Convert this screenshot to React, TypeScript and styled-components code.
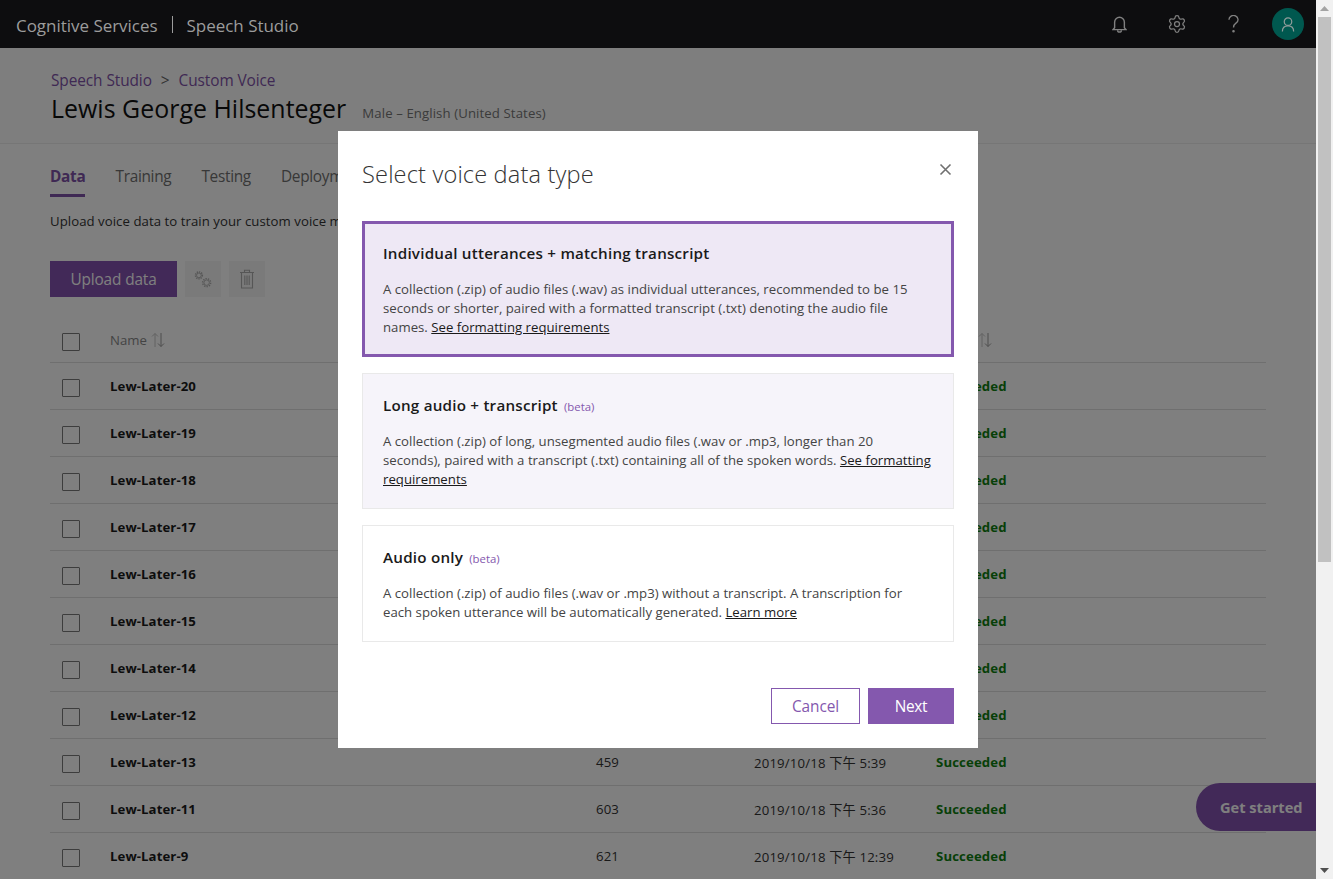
import React from "react";
import styled, { createGlobalStyle } from "styled-components";
import { Settings } from "lucide-react";

const FONT = `"Open Sans", "Noto Sans CJK SC", sans-serif`;

const Global = createGlobalStyle`
  html, body { margin: 0; padding: 0; height: 100%; overflow: hidden; background: #fff; }
  * { box-sizing: border-box; }
  body { font-family: ${FONT}; color: #1a1a1a; }
`;

const Shell = styled.div`
  display: flex;
  width: 1333px;
  height: 879px;
  overflow: hidden;
`;
const Viewport = styled.div`
  position: relative;
  flex: 1;
  min-width: 0;
  overflow: hidden;
  background: #fff;
`;
const Scrollbar = styled.div`
  width: 17px;
  background: #f1f1f1;
  display: flex;
  flex-direction: column;
  align-items: center;
`;
const ScrollButton = styled.div`
  height: 17px;
  width: 17px;
  display: flex;
  align-items: center;
  justify-content: center;
  flex: none;
`;
const ScrollThumb = styled.div`
  width: 13px;
  height: 545px;
  background: #c1c1c1;
`;
const ScrollSpace = styled.div`
  flex: 1;
`;

const TopBar = styled.header`
  position: relative;
  z-index: 3;
  height: 48px;
  background: #0d0d0f;
  display: flex;
  align-items: center;
  padding: 0 24px 0 16px;
  color: #9c9c9c;
`;
const Brand = styled.span`
  font-size: 17px;
  letter-spacing: -0.03px;
  line-height: 48px;
  padding-top: 3px;
  white-space: nowrap;
`;
const BrandRule = styled.span`
  width: 1px;
  height: 17px;
  background: #9c9c9c;
  margin: 0 14px;
`;
const TopActions = styled.div`
  margin-left: auto;
  display: flex;
  align-items: center;
`;
const TopIcon = styled.div`
  width: 57px;
  height: 48px;
  display: flex;
  align-items: center;
  justify-content: center;
`;
const Avatar = styled.div`
  width: 32px;
  height: 32px;
  margin-left: 10px;
  margin-right: -12px;
  border-radius: 50%;
  background: #00584f;
  display: flex;
  align-items: center;
  justify-content: center;
`;

const Hero = styled.section`
  height: 96px;
  background: #fdfdfd;
  border-bottom: 1px solid #ededed;
  padding: 22px 51px 0;
`;
const Crumbs = styled.div`
  font-size: 15.4px;
  letter-spacing: -0.08px;
  line-height: 21px;
  color: #7f52a8;
  display: flex;
  gap: 9px;
`;
const CrumbSep = styled.span`
  color: #666;
`;
const TitleRow = styled.div`
  display: flex;
  align-items: baseline;
`;
const Title = styled.h1`
  margin: 0;
  font-size: 24.9px;
  font-weight: 500;
  letter-spacing: 0.03px;
  line-height: 34px;
  color: #111;
`;
const Subtitle = styled.span`
  margin-left: 16px;
  font-size: 13.2px;
  letter-spacing: 0.1px;
  color: #777;
`;

const Body = styled.div`
  padding: 0 50px;
`;
const Tabs = styled.nav`
  display: flex;
  gap: 30px;
  margin-top: 21px;
`;
const Tab = styled.span<{ $active?: boolean }>`
  height: 32px;
  font-size: 15.4px;
  letter-spacing: -0.3px;
  line-height: 24px;
  font-weight: ${(p) => (p.$active ? 700 : 400)};
  color: ${(p) => (p.$active ? "#7f52a8" : "#707070")};
  border-bottom: 3px solid ${(p) => (p.$active ? "#7f52a8" : "transparent")};
`;
const Lead = styled.p`
  margin: 14px 0 0;
  font-size: 13.2px;
  letter-spacing: 0.05px;
  line-height: 20px;
  color: #333;
  white-space: nowrap;
`;
const Toolbar = styled.div`
  display: flex;
  gap: 8px;
  margin-top: 30px;
`;
const PrimaryAction = styled.div`
  width: 127px;
  height: 36px;
  background: #8452b0;
  color: #fff;
  font-size: 15.4px;
  letter-spacing: -0.14px;
  display: flex;
  align-items: center;
  justify-content: center;
`;
const IconAction = styled.div`
  width: 36px;
  height: 36px;
  background: #f4f4f4;
  display: flex;
  align-items: center;
  justify-content: center;
`;

const Table = styled.div`
  margin-top: 20px;
  width: 1216px;
`;
const Row = styled.div<{ $head?: boolean }>`
  display: grid;
  grid-template-columns: 60px 486px 158px 182px 1fr;
  align-items: center;
  height: ${(p) => (p.$head ? "46px" : "47px")};
  border-bottom: 1px solid #dedede;
  font-size: 13.2px;
  color: #333;
`;
const Checkbox = styled.span`
  width: 18px;
  height: 18px;
  margin: 4px 0 0 12px;
  border: 1px solid #7a7a7a;
  border-radius: 1px;
`;
const HeadName = styled.span`
  display: flex;
  align-items: center;
  gap: 4px;
  color: #888;
  font-size: 13.2px;
`;
const HeadSortOnly = styled.span`
  display: flex;
  align-items: center;
  padding-left: 42px;
`;
const NameCell = styled.span`
  font-weight: 700;
  color: #1a1a1a;
  letter-spacing: 0.08px;
`;
const CountCell = styled.span`
  color: #333;
  letter-spacing: 0.1px;
`;
const DateCell = styled.span`
  color: #333;
  letter-spacing: 0.16px;
  white-space: nowrap;
`;
const StatusCell = styled.span`
  font-weight: 700;
  color: #0e8010;
  letter-spacing: 0.13px;
`;

const GetStarted = styled.div`
  position: absolute;
  z-index: 1;
  right: 0;
  top: 783px;
  width: 120px;
  height: 48px;
  background: #8452b0;
  border-radius: 24px 0 0 24px;
  display: flex;
  align-items: center;
  padding-left: 24px;
  color: #fff;
  font-size: 14.6px;
  font-weight: 700;
  letter-spacing: 0;
  white-space: nowrap;
`;

const Scrim = styled.div`
  position: absolute;
  z-index: 2;
  inset: 0;
  background: rgba(0, 0, 0, 0.5);
`;

const Dialog = styled.div`
  position: absolute;
  z-index: 4;
  left: 338px;
  top: 131px;
  width: 640px;
  height: 617px;
  background: #fff;
  padding: 0 24px;
  display: flex;
  flex-direction: column;
`;
const DialogHead = styled.div`
  height: 90px;
  display: flex;
  justify-content: space-between;
  padding-top: 26px;
`;
const DialogTitle = styled.h2`
  margin: 0;
  font-size: 23.6px;
  font-weight: 300;
  letter-spacing: 0.15px;
  line-height: 34px;
  color: #333;
`;
const CloseButton = styled.div`
  margin: 6px 2px 0 0;
  width: 13px;
  height: 13px;
  line-height: 0;
`;
const Options = styled.div`
  display: flex;
  flex-direction: column;
  gap: 16px;
`;
const Option = styled.div<{ $kind: "selected" | "hover" | "plain" }>`
  border: ${(p) => (p.$kind === "selected" ? "3px solid #8458ae" : "1px solid #e9e9e9")};
  background: ${(p) =>
    p.$kind === "selected" ? "#eee8f5" : p.$kind === "hover" ? "#f6f4fa" : "#fff"};
  padding: ${(p) => (p.$kind === "selected" ? "18px 18px 17px" : "20px 20px 19px")};
`;
const OptionTitle = styled.div`
  height: 22px;
  font-size: 15.2px;
  font-weight: 600;
  letter-spacing: 0.22px;
  line-height: 22px;
  color: #1a1a1a;
`;
const Beta = styled.span`
  margin-left: 2px;
  font-size: 11.4px;
  font-weight: 400;
  letter-spacing: 0;
  color: #8458ae;
`;
const OptionText = styled.p`
  margin: 16px 0 0;
  font-size: 13.2px;
  letter-spacing: 0.01px;
  line-height: 19px;
  color: #444;
  white-space: nowrap;
`;
const OptionLink = styled.a`
  color: #1a1a1a;
  text-decoration: underline;
`;
const DialogFoot = styled.div`
  margin-top: 46px;
  display: flex;
  justify-content: flex-end;
  gap: 8px;
`;
const CancelButton = styled.div`
  width: 89px;
  height: 36px;
  border: 1px solid #8458ae;
  color: #8458ae;
  font-size: 15.4px;
  letter-spacing: -0.1px;
  display: flex;
  align-items: center;
  justify-content: center;
`;
const NextButton = styled.div`
  width: 86px;
  height: 36px;
  background: #8458ae;
  color: #fff;
  font-size: 15.4px;
  font-weight: 500;
  letter-spacing: -0.3px;
  display: flex;
  align-items: center;
  justify-content: center;
`;

const rows: [string, string, string][] = [
  ["Lew-Later-20", "", ""],
  ["Lew-Later-19", "", ""],
  ["Lew-Later-18", "", ""],
  ["Lew-Later-17", "", ""],
  ["Lew-Later-16", "", ""],
  ["Lew-Later-15", "", ""],
  ["Lew-Later-14", "", ""],
  ["Lew-Later-12", "", ""],
  ["Lew-Later-13", "459", "2019/10/18 下午 5:39"],
  ["Lew-Later-11", "603", "2019/10/18 下午 5:36"],
  ["Lew-Later-9", "621", "2019/10/18 下午 12:39"],
];

const SortIcon = () => (
  <svg width="14" height="16" viewBox="0 0 14 16" fill="none" stroke="#c4c4c4" strokeWidth="1">
    <path d="M4 15V1.5M1 4.5l3-3 3 3" />
    <path d="M10 1v13.5M7 11.5l3 3 3-3" stroke="#9a9a9a" />
  </svg>
);

export default function App() {
  return (
    <Shell>
      <Global />
      <Viewport>
        <TopBar>
          <Brand>Cognitive Services</Brand>
          <BrandRule />
          <Brand>Speech Studio</Brand>
          <TopActions>
            <TopIcon>
              <svg width="15" height="17" viewBox="0 0 16 18" fill="none" stroke="#808080" strokeWidth="1.5">
                <path d="M1 14.5h14l-1.8-2V6.5a5.2 5.2 0 0 0-10.4 0v6z" />
                <path d="M6 15a2 2 0 0 0 4 0" />
              </svg>
            </TopIcon>
            <TopIcon>
              <Settings size={20} color="#808080" strokeWidth={1.5} />
            </TopIcon>
            <TopIcon>
              <svg width="11" height="18" viewBox="0 0 12 20" fill="none" stroke="#808080" strokeWidth="1.5">
                <path d="M1 5.2a5 4.6 0 1 1 8 3.6c-1.8 1.3-3 2.4-3 5" />
                <circle cx="6" cy="18" r=".7" fill="#808080" />
              </svg>
            </TopIcon>
            <Avatar>
              <svg width="14" height="15" viewBox="0 0 14 16" fill="none" stroke="#8f9c9a" strokeWidth="1.3">
                <circle cx="7" cy="5" r="4" />
                <path d="M1 15.5c0-3.6 2.4-6 6-6s6 2.4 6 6" />
              </svg>
            </Avatar>
          </TopActions>
        </TopBar>
        <Hero>
          <Crumbs>
            <span>Speech Studio</span>
            <CrumbSep>&gt;</CrumbSep>
            <span>Custom Voice</span>
          </Crumbs>
          <TitleRow>
            <Title>Lewis George Hilsenteger</Title>
            <Subtitle>Male – English (United States)</Subtitle>
          </TitleRow>
        </Hero>
        <Body>
          <Tabs>
            <Tab $active>Data</Tab>
            <Tab>Training</Tab>
            <Tab>Testing</Tab>
            <Tab>Deployment</Tab>
          </Tabs>
          <Lead>Upload voice data to train your custom voice model.</Lead>
          <Toolbar>
            <PrimaryAction>Upload data</PrimaryAction>
            <IconAction>
              <svg width="22" height="20" viewBox="0 0 24 22" fill="none" stroke="#adadad" strokeWidth="1">
                <circle cx="7.5" cy="7" r="2.6" />
                <circle cx="7.5" cy="7" r="3.8" strokeDasharray="1.4 1.1" strokeWidth="1.6" />
                <circle cx="16" cy="15" r="3" />
                <circle cx="16" cy="15" r="4.4" strokeDasharray="1.5 1.2" strokeWidth="1.6" />
              </svg>
            </IconAction>
            <IconAction>
              <svg width="16" height="20" viewBox="0 0 16 20" fill="none" stroke="#adadad" strokeWidth="1.1">
                <path d="M1 3.5h14M5.5 3.5V1.2h5v2.3M2.5 3.5v15.5h11V3.5M5.8 6.5v9.5M8 6.5v9.5M10.2 6.5v9.5" />
              </svg>
            </IconAction>
          </Toolbar>
          <Table>
            <Row $head>
              <Checkbox />
              <HeadName>
                Name <SortIcon />
              </HeadName>
              <span />
              <span />
              <HeadSortOnly>
                <SortIcon />
              </HeadSortOnly>
            </Row>
            {rows.map(([name, count, date]) => (
              <Row key={name}>
                <Checkbox />
                <NameCell>{name}</NameCell>
                <CountCell>{count}</CountCell>
                <DateCell>{date}</DateCell>
                <StatusCell>Succeeded</StatusCell>
              </Row>
            ))}
          </Table>
        </Body>
        <GetStarted>Get started</GetStarted>
        <Scrim />
        <Dialog>
          <DialogHead>
            <DialogTitle>Select voice data type</DialogTitle>
            <CloseButton>
              <svg width="13" height="13" viewBox="0 0 13 13" stroke="#707070" strokeWidth="1.6">
                <path d="M1.5 1.5l10 10M11.5 1.5l-10 10" />
              </svg>
            </CloseButton>
          </DialogHead>
          <Options>
            <Option $kind="selected">
              <OptionTitle>Individual utterances + matching transcript</OptionTitle>
              <OptionText>
                A collection (.zip) of audio files (.wav) as individual utterances, recommended to be 15
                <br />
                seconds or shorter, paired with a formatted transcript (.txt) denoting the audio file
                <br />
                names. <OptionLink>See formatting requirements</OptionLink>
              </OptionText>
            </Option>
            <Option $kind="hover">
              <OptionTitle>
                Long audio + transcript <Beta>(beta)</Beta>
              </OptionTitle>
              <OptionText>
                A collection (.zip) of long, unsegmented audio files (.wav or .mp3, longer than 20
                <br />
                seconds), paired with a transcript (.txt) containing all of the spoken words.{" "}
                <OptionLink>See formatting</OptionLink>
                <br />
                <OptionLink>requirements</OptionLink>
              </OptionText>
            </Option>
            <Option $kind="plain">
              <OptionTitle>
                Audio only <Beta>(beta)</Beta>
              </OptionTitle>
              <OptionText>
                A collection (.zip) of audio files (.wav or .mp3) without a transcript. A transcription for
                <br />
                each spoken utterance will be automatically generated. <OptionLink>Learn more</OptionLink>
              </OptionText>
            </Option>
          </Options>
          <DialogFoot>
            <CancelButton>Cancel</CancelButton>
            <NextButton>Next</NextButton>
          </DialogFoot>
        </Dialog>
      </Viewport>
      <Scrollbar>
        <ScrollButton>
          <svg width="9" height="5" viewBox="0 0 9 5"><path d="M4.5 0L9 5H0z" fill="#a3a3a3" /></svg>
        </ScrollButton>
        <ScrollThumb />
        <ScrollSpace />
        <ScrollButton>
          <svg width="9" height="5" viewBox="0 0 9 5"><path d="M0 0h9L4.5 5z" fill="#505050" /></svg>
        </ScrollButton>
      </Scrollbar>
    </Shell>
  );
}
